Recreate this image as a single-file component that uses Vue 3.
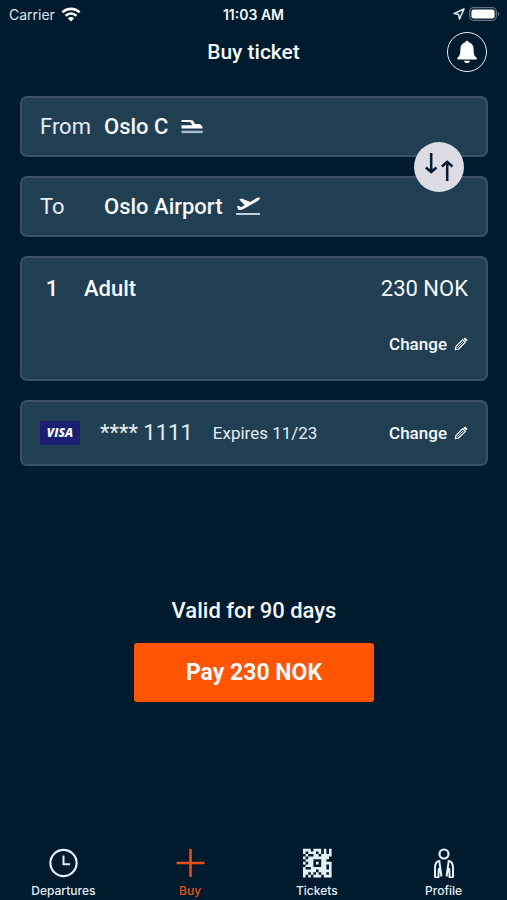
<script setup>
import { ref } from 'vue'

const from = ref({ name: 'Oslo C', kind: 'train' })
const to = ref({ name: 'Oslo Airport', kind: 'plane' })
const active = ref('Buy')
const tabs = ['Departures', 'Buy', 'Tickets', 'Profile']

function swap() {
  const previous = from.value
  from.value = to.value
  to.value = previous
}

const code = [
  '11101110101',
  '10111010101',
  '01001101111',
  '10111111110',
  '01110001100',
  '10110101111',
  '01110001101',
  '10011111101',
  '11111011111',
  '11010101101',
  '10101110111',
]
const codePath = code
  .flatMap((row, y) => [...row].map((cell, x) => (cell === '1' ? `M${x} ${y}h1v1h-1z` : '')))
  .join('')
</script>

<template>
  <div class="screen">
    <div class="status">
      <span class="carrier">
        Carrier
        <svg width="20" height="15" viewBox="0 0 20 15" aria-hidden="true">
          <g fill="none" stroke="#fff" stroke-width="2.6">
            <path d="M1.4 5.4a12.2 12.2 0 0 1 17.2 0" />
            <path d="M4.6 8.8a7.6 7.6 0 0 1 10.8 0" />
          </g>
          <path d="M10 14.4l-3.2-3.2a4.6 4.6 0 0 1 6.4 0z" fill="#fff" />
        </svg>
      </span>
      <span class="time">11:03 AM</span>
      <span class="power">
        <svg width="12" height="12" viewBox="0 0 12 12" aria-hidden="true">
          <path d="M11 1L1 5.6l4.6.8.9 4.6z" fill="none" stroke="#e6edf3" stroke-width="1.5" stroke-linejoin="round" />
        </svg>
        <svg width="31" height="14" viewBox="0 0 31 14" aria-hidden="true">
          <rect x=".7" y=".7" width="26.6" height="12.6" rx="4" fill="none" stroke="#66727f" stroke-width="1.3" />
          <rect x="2.4" y="2.4" width="23.2" height="9.2" rx="2.4" fill="#fff" />
          <path d="M28.8 4.8q1.7.7 1.7 2.2t-1.7 2.2z" fill="#66727f" />
        </svg>
      </span>
    </div>

    <header class="header">
      <h1>Buy ticket</h1>
      <button class="bell" aria-label="Notifications">
        <svg width="20" height="24" viewBox="0 0 20 24" aria-hidden="true">
          <path d="M10 .8c1 0 1.6.6 1.7 1.5 3.3.8 4.9 3.6 4.9 7 0 5.3.8 6.9 3 8.3v1.9H.4v-1.9c2.2-1.4 3-3 3-8.3 0-3.4 1.6-6.2 4.9-7C8.4 1.4 9 .8 10 .8zM7 20.7h6c-.3 1.4-1.5 2.3-3 2.3s-2.7-.9-3-2.3z" fill="#fff" />
        </svg>
      </button>
    </header>

    <main class="content">
      <section class="route">
        <button v-for="(stop, i) in [from, to]" :key="i" class="card stop">
          <span class="direction">{{ i === 0 ? 'From' : 'To' }}</span>
          <strong>{{ stop.name }}</strong>
          <svg v-if="stop.kind === 'train'" width="24" height="20" viewBox="0 0 24 20" aria-hidden="true">
            <path d="M1.500 3h8.500c2.500 0 3.300.7 3.900 1.900l.9 2h3.200c2.800 0 4.700 1.700 4.700 4.700H1.500V8.300h10.700L11.100 6c-.3-.6-.7-.9-1.500-.9H1.500z" fill="#fff" />
            <path d="M1.500 14.900h21.200" stroke="#a9bdcb" stroke-width="2.4" />
          </svg>
          <svg v-else width="26" height="20" viewBox="0 0 26 20" aria-hidden="true">
            <path d="M2 9.300l1.500-.5 2.400 1.500 3.800-2L4.300 2.500l2.400-.9 8.500 3.500 5-3.200c1.700-1.100 3.800-1.600 4.600-1.300.6.800-.8 2.700-2.500 3.700L8 12.300c-1.700.9-3.800 1-4.800.2z" fill="#fff" />
            <path d="M1 17h24" stroke="#c3d1dc" stroke-width="2" />
          </svg>
        </button>
        <button class="swap" aria-label="Swap stations" @click="swap">
          <svg width="28" height="30" viewBox="0 0 28 30" fill="none" stroke="#061b31" stroke-width="2.5" aria-hidden="true">
            <path d="M6.200 1v19M.9 15.500l5.300 4.500 5.300-4.500M22.200 29V10M16.900 14.500l5.300-4.500 5.300 4.500" />
          </svg>
        </button>
      </section>

      <section class="card passengers">
        <div class="line">
          <span class="count">1</span>
          <strong>Adult</strong>
          <span class="price">230 NOK</span>
        </div>
        <button class="change">
          Change
          <svg width="14" height="14" viewBox="0 0 14 14" aria-hidden="true">
            <path d="M1.300 12.700l.7-3.300 6.700-6.700 2.600 2.600L4.600 12z" fill="none" stroke="#fff" stroke-width="1.2" stroke-linejoin="round" />
            <path d="M3.300 10.700l6-6" stroke="#fff" stroke-width=".8" />
            <path d="M9.400 1.900l1-1q.6-.5 1.200 0l1.500 1.500q.5.6 0 1.200l-1 1z" fill="#fff" />
          </svg>
        </button>
      </section>

      <section class="card payment">
        <span class="visa">VISA</span>
        <span class="number">**** 1111</span>
        <span class="expires">Expires 11/23</span>
        <button class="change">
          Change
          <svg width="14" height="14" viewBox="0 0 14 14" aria-hidden="true">
            <path d="M1.300 12.700l.7-3.300 6.700-6.700 2.600 2.600L4.600 12z" fill="none" stroke="#fff" stroke-width="1.2" stroke-linejoin="round" />
            <path d="M3.300 10.700l6-6" stroke="#fff" stroke-width=".8" />
            <path d="M9.400 1.900l1-1q.6-.5 1.200 0l1.500 1.500q.5.6 0 1.200l-1 1z" fill="#fff" />
          </svg>
        </button>
      </section>

      <section class="checkout">
        <p>Valid for 90 days</p>
        <button class="pay">Pay 230 NOK</button>
      </section>
    </main>

    <nav class="tabs">
      <a v-for="tab in tabs" :key="tab" href="#" :class="{ active: tab === active }" @click.prevent="active = tab">
        <svg width="30" height="30" viewBox="0 0 30 30" fill="none" stroke="currentColor" stroke-width="2" aria-hidden="true">
          <g v-if="tab === 'Departures'">
            <circle cx="15.5" cy="15" r="13.1" stroke-width="2.2" />
            <path d="M15.500 7.500v8.700H22" />
          </g>
          <path v-else-if="tab === 'Buy'" d="M15.500 1v28M1.500 15h28" stroke-width="2.6" />
          <path v-else-if="tab === 'Tickets'" transform="translate(1 .8) scale(2.6)" :d="codePath" fill="currentColor" stroke="none" />
          <g v-else>
            <circle cx="15" cy="6" r="4.5" stroke-width="2.2" />
            <path d="M6 29.500V20c0-4.500 1.300-6.500 4.300-6.900l2.100 15.400M9.800 20l-.4 9.500H6M24 29.500V20c0-4.500-1.300-6.500-4.300-6.900l-2.100 15.400M20.200 20l.4 9.500H24" />
          </g>
        </svg>
        {{ tab }}
      </a>
    </nav>
  </div>
</template>

<style>
body {
  margin: 0;
  background: #001a2e;
}
</style>

<style scoped>
.screen {
  display: flex;
  flex-direction: column;
  box-sizing: border-box;
  min-height: 100vh;
  background: #001a2e;
  color: #f5f9fc;
  font-family: Roboto, "Liberation Sans", sans-serif;
}
button {
  margin: 0;
  padding: 0;
  border: 0;
  background: none;
  color: inherit;
  font-family: inherit;
  cursor: pointer;
}
svg {
  display: block;
  flex: none;
}
strong {
  font-weight: 500;
}
.status {
  display: grid;
  grid-template-columns: 1fr auto 1fr;
  align-items: center;
  height: 28px;
  padding: 0 7px;
  font-family: Inter, sans-serif;
  font-size: 14px;
}
.carrier,
.power {
  display: flex;
  align-items: center;
  color: #dfe7ee;
}
.carrier {
  gap: 6px;
  padding-left: 2px;
}
.time {
  font-weight: 600;
}
.power {
  justify-content: flex-end;
  gap: 4px;
}
.header {
  display: grid;
  grid-template-columns: 1fr auto 1fr;
  align-items: center;
  height: 48px;
  padding: 0 20px;
}
h1 {
  grid-column: 2;
  margin: 0;
  font-size: 21px;
  font-weight: 500;
  line-height: 26px;
}
.bell {
  display: grid;
  place-items: center;
  justify-self: end;
  width: 40px;
  height: 40px;
  border: 1px solid #e6edf3;
  border-radius: 50%;
}
.content {
  display: flex;
  flex: 1;
  flex-direction: column;
  gap: 19px;
  padding: 20px 19px 0 20px;
  font-size: 22px;
  line-height: 26px;
}
.route {
  position: relative;
  display: flex;
  flex-direction: column;
  gap: 19px;
}
.card {
  box-sizing: border-box;
  border: 2px solid #3b5064;
  border-radius: 7px;
  background: #203f52;
}
.stop {
  display: flex;
  align-items: center;
  height: 61px;
  padding: 0 18px;
  font-size: 22px;
  text-align: left;
}
.direction {
  width: 64px;
  color: #e4edf4;
}
.stop svg {
  margin-left: 12px;
}
.swap {
  position: absolute;
  top: 50%;
  right: 24px;
  display: grid;
  place-items: center;
  width: 50px;
  height: 50px;
  border-radius: 50%;
  background: #dddbe4;
  transform: translateY(-50%);
}
.passengers {
  display: flex;
  flex-direction: column;
  gap: 30px;
  height: 125px;
  padding: 18px;
}
.line {
  display: flex;
}
.count {
  width: 24px;
  margin-right: 20px;
  font-weight: 500;
  text-align: center;
}
.price {
  margin-left: auto;
}
.change {
  display: flex;
  align-items: center;
  align-self: flex-end;
  gap: 7px;
  font-size: 17px;
  font-weight: 500;
  line-height: 24px;
}
.payment {
  display: flex;
  align-items: center;
  height: 66px;
  padding: 0 18px;
}
.payment .change {
  align-self: center;
  margin-left: auto;
}
.visa {
  width: 40px;
  background: #1a1f71;
  font-family: "Open Sans", sans-serif;
  font-size: 12px;
  font-style: italic;
  font-weight: 800;
  line-height: 24px;
  text-align: center;
}
.number {
  margin: 0 20px;
  color: #e4edf4;
}
.expires {
  color: #e4edf4;
  font-size: 17px;
}
.checkout {
  display: flex;
  flex-direction: column;
  align-items: center;
  gap: 19px;
  margin-top: 113px;
}
.checkout p {
  margin: 0;
  font-weight: 500;
}
.pay {
  height: 59px;
  padding: 0 52px;
  border-radius: 3px;
  background: #ff5400;
  font-size: 23px;
  font-weight: 700;
}
.tabs {
  display: grid;
  grid-template-columns: repeat(4, 1fr);
  padding-bottom: 1px;
}
.tabs a {
  display: flex;
  flex-direction: column;
  align-items: center;
  gap: 5px;
  color: #e6f0f7;
  font-family: Inter, sans-serif;
  font-size: 12px;
  font-weight: 500;
  line-height: 16px;
  text-decoration: none;
}
.tabs .active {
  color: #e65014;
}
</style>
